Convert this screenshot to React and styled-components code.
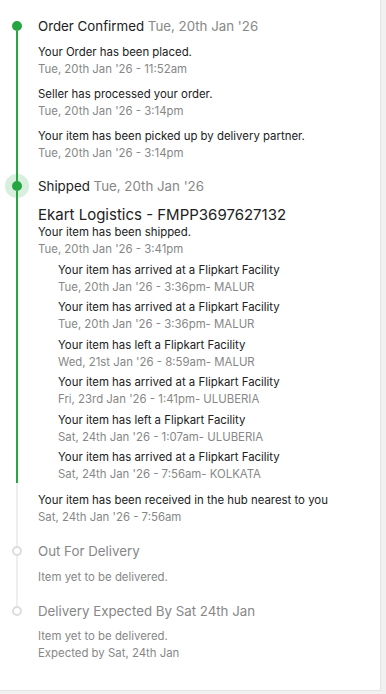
import React from "react";
import styled, { createGlobalStyle } from "styled-components";

const GlobalStyle = createGlobalStyle`
  html, body {
    margin: 0;
    padding: 0;
    background: #f1f1f1;
  }
  body {
    font-family: "Inter", "Liberation Sans", sans-serif;
    -webkit-font-smoothing: antialiased;
  }
`;

const GREEN = "#26a541";
const GREY_LINE = "#eeeeee";

const Card = styled.div`
  width: 381px;
  min-height: 674px;
  background: #fff;
  border-right: 1px solid #e4e4e4;
  border-bottom: 1px solid #e4e4e4;
  padding: 16px 0 28px 12px;
  box-sizing: border-box;
`;

const Step = styled.div`
  display: flex;
  gap: 16px;
`;

const Rail = styled.div`
  width: 10px;
  flex-shrink: 0;
  display: flex;
  flex-direction: column;
  align-items: center;
`;

const Stub = styled.div`
  width: 2px;
  height: 5px;
  background: ${(p) => p.color || "transparent"};
`;

const Line = styled.div`
  width: 2px;
  flex: 1;
  background: ${(p) => p.color || "transparent"};
`;

const Dot = styled.div`
  width: 10px;
  height: 10px;
  border-radius: 50%;
  box-sizing: border-box;
  flex-shrink: 0;
  background: ${(p) => (p.hollow ? "#fff" : GREEN)};
  border: ${(p) => (p.hollow ? "2px solid #dcdcdc" : "none")};
  box-shadow: ${(p) => (p.active ? "0 0 0 7px rgba(38, 165, 65, 0.18)" : "none")};
`;

const Body = styled.div`
  flex: 1;
  padding-top: ${(p) => p.top || 0}px;
  padding-bottom: ${(p) => p.bottom || 0}px;
`;

const Title = styled.div`
  font-size: 13.3px;
  line-height: 20px;
  color: ${(p) => (p.muted ? "#878787" : "#212121")};
  span {
    color: #878787;
  }
`;

const Carrier = styled.div`
  font-size: 15px;
  line-height: 18px;
  color: #212121;
  margin-top: 10px;
`;

const List = styled.div`
  display: flex;
  flex-direction: column;
  gap: ${(p) => p.gap}px;
  margin-top: ${(p) => p.top || 0}px;
  margin-left: ${(p) => p.indent || 0}px;
`;

const Text = styled.div`
  font-size: 11.4px;
  line-height: 17px;
  color: ${(p) => (p.muted ? "#878787" : "#212121")};
`;

const When = styled.div`
  font-size: 11.4px;
  line-height: 17px;
  color: #878787;
`;

const confirmed = [
  ["Your Order has been placed.", "Tue, 20th Jan '26 - 11:52am"],
  ["Seller has processed your order.", "Tue, 20th Jan '26 - 3:14pm"],
  ["Your item has been picked up by delivery partner.", "Tue, 20th Jan '26 - 3:14pm"],
];

const transit = [
  ["Your item has arrived at a Flipkart Facility", "Tue, 20th Jan '26 - 3:36pm- MALUR"],
  ["Your item has arrived at a Flipkart Facility", "Tue, 20th Jan '26 - 3:36pm- MALUR"],
  ["Your item has left a Flipkart Facility", "Wed, 21st Jan '26 - 8:59am- MALUR"],
  ["Your item has arrived at a Flipkart Facility", "Fri, 23rd Jan '26 - 1:41pm- ULUBERIA"],
  ["Your item has left a Flipkart Facility", "Sat, 24th Jan '26 - 1:07am- ULUBERIA"],
  ["Your item has arrived at a Flipkart Facility", "Sat, 24th Jan '26 - 7:56am- KOLKATA"],
];

function Entry({ text, when }) {
  return (
    <div>
      <Text>{text}</Text>
      <When>{when}</When>
    </div>
  );
}

export default function App() {
  return (
    <>
      <GlobalStyle />
      <Card>
        <Step>
          <Rail>
            <Stub />
            <Dot />
            <Line color={GREEN} />
          </Rail>
          <Body bottom={14}>
            <Title>
              Order Confirmed <span>Tue, 20th Jan '26</span>
            </Title>
            <List gap={8} top={8}>
              {confirmed.map(([t, w], i) => (
                <Entry key={i} text={t} when={w} />
              ))}
            </List>
          </Body>
        </Step>

        <Step>
          <Rail>
            <Stub color={GREEN} />
            <Dot active />
            <Line color={GREEN} />
          </Rail>
          <Body>
            <Title>
              Shipped <span>Tue, 20th Jan '26</span>
            </Title>
            <Carrier>Ekart Logistics - FMPP3697627132</Carrier>
            <Entry text="Your item has been shipped." when="Tue, 20th Jan '26 - 3:41pm" />
            <List gap={3.5} top={3.5} indent={20}>
              {transit.map(([t, w], i) => (
                <Entry key={i} text={t} when={w} />
              ))}
            </List>
          </Body>
        </Step>

        <Step>
          <Rail>
            <Line color={GREY_LINE} />
          </Rail>
          <Body top={8.5} bottom={15}>
            <Entry
              text="Your item has been received in the hub nearest to you"
              when="Sat, 24th Jan '26 - 7:56am"
            />
          </Body>
        </Step>

        <Step>
          <Rail>
            <Stub color={GREY_LINE} />
            <Dot hollow />
            <Line color={GREY_LINE} />
          </Rail>
          <Body bottom={15}>
            <Title muted>Out For Delivery</Title>
            <List gap={0} top={8}>
              <Text muted>Item yet to be delivered.</Text>
            </List>
          </Body>
        </Step>

        <Step>
          <Rail>
            <Stub color={GREY_LINE} />
            <Dot hollow />
            <Line />
          </Rail>
          <Body>
            <Title muted>Delivery Expected By Sat 24th Jan</Title>
            <List gap={0} top={7}>
              <Text muted>Item yet to be delivered.</Text>
              <Text muted>Expected by Sat, 24th Jan</Text>
            </List>
          </Body>
        </Step>
      </Card>
    </>
  );
}
